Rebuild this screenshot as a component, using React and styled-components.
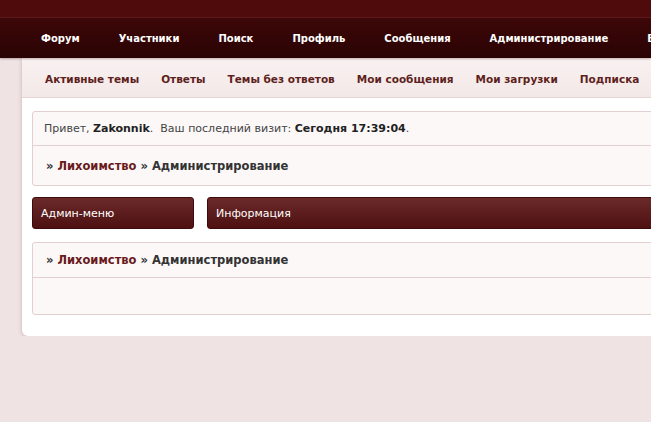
import React from 'react'
import styled, { createGlobalStyle } from 'styled-components'

const GlobalStyle = createGlobalStyle`
  html, body {
    margin: 0;
    padding: 0;
    background: #efe3e3;
    overflow: hidden;
    font-family: "DejaVu Sans", Verdana, sans-serif;
  }
`

/* 最上方深紅色條 */
const TopStrip = styled.div`
  height: 17px;
  background: #4f0a0b;
  border-bottom: 1px solid #5e1a1a;
`

/* 主選單 */
const MainNav = styled.nav`
  height: 40px;
  display: flex;
  align-items: center;
  gap: 39px;
  padding-left: 41px;
  background: linear-gradient(#3d0708, #2a0304);
  white-space: nowrap;
  box-shadow: 0 1px 2px rgba(60, 10, 10, 0.3);
  position: relative;
  z-index: 1;
`

const NavLink = styled.a`
  color: #ffffff;
  font-size: 10px;
  font-weight: bold;
  text-decoration: none;
`

/* 白色內容框 */
const Wrapper = styled.div`
  margin-left: 22px;
  width: 960px;
  background: #ffffff;
  border-radius: 0 0 6px 6px;
  box-shadow: 0 1px 4px rgba(120, 70, 70, 0.3);
  padding-bottom: 21px;
`

/* 次選單 */
const SubNav = styled.div`
  height: 39px;
  display: flex;
  align-items: center;
  gap: 22px;
  padding-left: 23px;
  background: linear-gradient(#f9f1f1, #f3e8e8);
  border-bottom: 1px solid #e4d4d4;
  white-space: nowrap;
`

const SubLink = styled.a`
  color: #5e1f20;
  font-size: 10.5px;
  font-weight: 600;
  text-decoration: none;
  padding-top: 2px;
`

const Content = styled.div`
  padding: 13px 10px 0 10px;
  display: flex;
  flex-direction: column;
`

/* 資訊面板 */
const Panel = styled.div`
  background: #fcf8f8;
  border: 1px solid #e2cfcf;
  border-radius: 3px;
  margin-bottom: ${(p) => p.$mb || 0}px;
`

const PanelRow = styled.div`
  height: ${(p) => p.$h}px;
  display: flex;
  align-items: center;
  padding: 0 11px;
  font-size: 11px;
  color: #333333;
  white-space: nowrap;
  & + & {
    border-top: 1px solid #e2cfcf;
  }
`

const Welcome = styled.span`
  color: #444;
  b {
    color: #222;
  }
`

const Crumbs = styled.div`
  font-weight: bold;
  font-size: 11.5px;
  color: #333;
  padding-left: 2px;
  a {
    color: #6a1a1c;
    text-decoration: none;
  }
`

/* 按鈕列 */
const ButtonRow = styled.div`
  display: flex;
  gap: 13px;
  margin-bottom: 13px;
`

const TabButton = styled.div`
  height: 32px;
  width: ${(p) => (p.$wide ? '760px' : '162px')};
  display: flex;
  align-items: center;
  padding-left: 8px;
  box-sizing: border-box;
  background: linear-gradient(#6b2a2a, #4e1011);
  border: 1px solid #3e0a0b;
  border-radius: 3px;
  color: #ffffff;
  font-size: 11px;
`

const navItems = [
  'Форум',
  'Участники',
  'Поиск',
  'Профиль',
  'Сообщения',
  'Администрирование',
  'Выход',
]

const subItems = [
  'Активные темы',
  'Ответы',
  'Темы без ответов',
  'Мои сообщения',
  'Мои загрузки',
  'Подписка',
]

function Breadcrumbs() {
  return (
    <Crumbs>
      » <a href="#">Лихоимство</a> » Администрирование
    </Crumbs>
  )
}

export default function App() {
  return (
    <>
      <GlobalStyle />
      <TopStrip />
      <MainNav>
        {navItems.map((item) => (
          <NavLink key={item} href="#">
            {item}
          </NavLink>
        ))}
      </MainNav>
      <Wrapper>
        <SubNav>
          {subItems.map((item) => (
            <SubLink key={item} href="#">
              {item}
            </SubLink>
          ))}
        </SubNav>
        <Content>
          <Panel $mb={11}>
            <PanelRow $h={33}>
              <Welcome>
                Привет, <b>Zakonnik</b>.&nbsp;&nbsp;Ваш последний визит:{' '}
                <b>Сегодня 17:39:04</b>.
              </Welcome>
            </PanelRow>
            <PanelRow $h={39}>
              <Breadcrumbs />
            </PanelRow>
          </Panel>
          <ButtonRow>
            <TabButton>Админ-меню</TabButton>
            <TabButton $wide>Информация</TabButton>
          </ButtonRow>
          <Panel>
            <PanelRow $h={34}>
              <Breadcrumbs />
            </PanelRow>
            <PanelRow $h={36} />
          </Panel>
        </Content>
      </Wrapper>
    </>
  )
}
